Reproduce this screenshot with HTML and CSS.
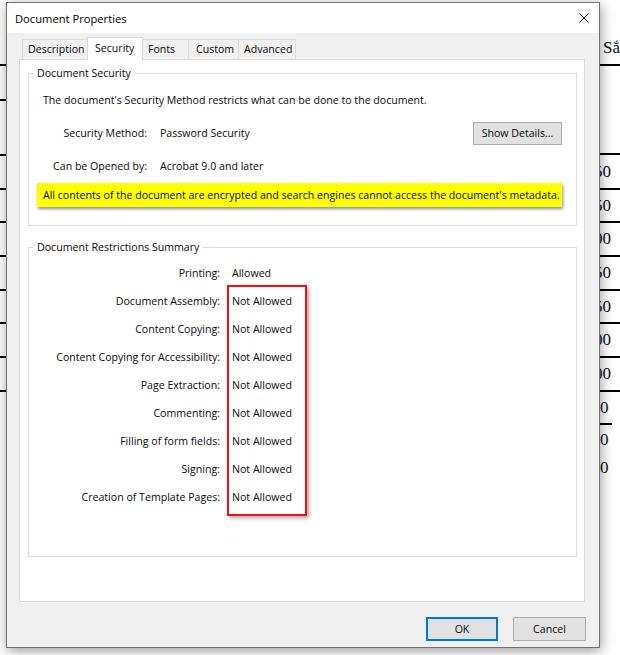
FILE: index.html
```html
<!DOCTYPE html>
<html lang="en">
<head>
    <meta charset="UTF-8">
    <meta name="viewport" content="width=device-width, initial-scale=1.0">
    <title>Document Properties</title>
    <link rel="stylesheet" href="styles.css">
</head>
<body>
    <!-- spreadsheet behind the dialog -->
    <div class="sheet">
        <div class="sheet-col sheet-left">
            <div class="cell h66"></div>
            <div class="cell h35"></div>
            <div class="cell h55"></div>
            <div class="cell h34"></div>
            <div class="cell h33"></div>
            <div class="cell h34"></div>
            <div class="cell h34"></div>
            <div class="cell h33"></div>
            <div class="cell h34"></div>
            <div class="cell h34"></div>
        </div>
        <div class="sheet-col sheet-right">
            <div class="cell h66 head">Sắ</div>
            <div class="cell h89"></div>
            <div class="cell h35">50</div>
            <div class="cell h33">50</div>
            <div class="cell h34">00</div>
            <div class="cell h34">50</div>
            <div class="cell h33">50</div>
            <div class="cell h34">00</div>
            <div class="cell h34">00</div>
            <div class="cell h33 single short">0</div>
            <div class="cell h30 single plain">0</div>
            <div class="cell h25 single plain">0</div>
        </div>
    </div>

    <div class="dialog">
        <div class="titlebar">
            <span class="title">Document Properties</span>
            <svg class="close" width="10" height="10" viewBox="0 0 10 10">
                <path d="M0.5 0.5 L9.5 9.5 M9.5 0.5 L0.5 9.5" stroke="#111" stroke-width="1" fill="none"/>
            </svg>
        </div>

        <div class="tabs">
            <div class="tab tab-desc">Description</div>
            <div class="tab tab-security active">Security</div>
            <div class="tab tab-fonts">Fonts</div>
            <div class="tab tab-custom">Custom</div>
            <div class="tab tab-advanced">Advanced</div>
        </div>

        <div class="panel">
            <fieldset class="group group-security">
                <legend>Document Security</legend>
                <p class="intro">The document's Security Method restricts what can be done to the document.</p>
                <div class="field-row first-row">
                    <span class="field-label">Security Method:</span>
                    <span class="field-value">Password Security</span>
                    <button class="btn btn-details">Show Details...</button>
                </div>
                <div class="field-row">
                    <span class="field-label">Can be Opened by:</span>
                    <span class="field-value">Acrobat 9.0 and later</span>
                </div>
                <div class="note">All contents of the document are encrypted and search engines cannot access the document's metadata.</div>
            </fieldset>

            <fieldset class="group group-restrictions">
                <legend>Document Restrictions Summary</legend>
                <div class="summary">
                    <div class="summary-labels">
                        <div class="summary-row">Printing:</div>
                        <div class="summary-row">Document Assembly:</div>
                        <div class="summary-row">Content Copying:</div>
                        <div class="summary-row">Content Copying for Accessibility:</div>
                        <div class="summary-row">Page Extraction:</div>
                        <div class="summary-row">Commenting:</div>
                        <div class="summary-row">Filling of form fields:</div>
                        <div class="summary-row">Signing:</div>
                        <div class="summary-row">Creation of Template Pages:</div>
                    </div>
                    <div class="summary-values">
                        <div class="summary-row allowed">Allowed</div>
                        <div class="highlight">
                            <div class="summary-row">Not Allowed</div>
                            <div class="summary-row">Not Allowed</div>
                            <div class="summary-row">Not Allowed</div>
                            <div class="summary-row">Not Allowed</div>
                            <div class="summary-row">Not Allowed</div>
                            <div class="summary-row">Not Allowed</div>
                            <div class="summary-row">Not Allowed</div>
                            <div class="summary-row">Not Allowed</div>
                        </div>
                    </div>
                </div>
            </fieldset>
        </div>

        <div class="actions">
            <button class="btn btn-ok">OK</button>
            <button class="btn btn-cancel">Cancel</button>
        </div>
    </div>
</body>
</html>
```

FILE: styles.css
```css
* {
    margin: 0;
    padding: 0;
    box-sizing: border-box;
}

body {
    width: 620px;
    height: 655px;
    position: relative;
    overflow: hidden;
    background: #ffffff;
    font-family: 'Open Sans', 'Noto Sans', sans-serif;
    font-size: 10.6px;
    color: #0a0a0a;
}

/* background spreadsheet */
.sheet {
    display: flex;
    justify-content: space-between;
    height: 655px;
}

.sheet-col {
    display: flex;
    flex-direction: column;
}

.sheet-left {
    width: 6px;
}

.sheet-right {
    width: 32px;
    font-family: 'Liberation Serif', 'DejaVu Serif', serif;
    font-size: 17px;
    color: #101020;
}

.cell {
    border-bottom: 2px solid #000;
    padding-left: 6px;
    display: flex;
    align-items: center;
    white-space: nowrap;
}

.cell.head {
    align-items: flex-start;
    padding-top: 38px;
    padding-left: 15px;
    line-height: 20px;
}

.cell.single {
    padding-left: 12px;
}

.cell.short {
    width: 24px;
}

.cell.plain {
    border-bottom: none;
}

.h25 { height: 25px; }
.h30 { height: 30px; }
.h33 { height: 33px; }
.h34 { height: 34px; }
.h35 { height: 35px; }
.h55 { height: 55px; }
.h66 { height: 66px; }
.h89 { height: 89px; }

/* dialog */
.dialog {
    position: absolute;
    left: 6px;
    top: 2px;
    width: 594px;
    background: #f0f0f0;
    border: 1px solid #707070;
    box-shadow: 1px 3px 12px rgba(0, 0, 0, 0.4);
    display: flex;
    flex-direction: column;
}

.titlebar {
    height: 30px;
    background: #ffffff;
    display: flex;
    align-items: center;
    justify-content: space-between;
    padding: 0 10px 0 8px;
}

.title {
    font-size: 11.2px;
    color: #000;
}

.close {
    display: block;
    margin-top: -1px;
}

/* tabs */
.tabs {
    display: flex;
    align-items: flex-end;
    height: 22px;
    margin: 4px 0 0 15px;
}

.tab {
    height: 20px;
    line-height: 19px;
    padding-left: 5px;
    background: #f0f0f0;
    border: 1px solid #d9d9d9;
    border-bottom: none;
    margin-left: -1px;
    white-space: nowrap;
}

.tab:first-child {
    margin-left: 0;
}

.tab.active {
    height: 23px;
    line-height: 20px;
    margin-bottom: -1px;
    padding-left: 7px;
    background: #ffffff;
    position: relative;
    z-index: 1;
}

.tab-desc { width: 66px; }
.tab-security { width: 56px; }
.tab-fonts { width: 47px; }
.tab-custom { width: 51px; padding-left: 7px; }
.tab-advanced { width: 58px; }

.panel {
    height: 543px;
    margin: 0 14px 0 12px;
    background: #ffffff;
    border: 1px solid #d9d9d9;
    padding: 5px 7px 0 8px;
}

/* group boxes */
.group {
    border: 1px solid #dcdcdc;
    padding: 0 14px;
    min-width: 0;
}

.group legend {
    margin-left: -10px;
    padding: 0 4px;
    line-height: 16px;
}

.group-security {
    padding-bottom: 18px;
}

.intro {
    margin-top: 11px;
    line-height: 16px;
}

.field-row {
    display: flex;
    align-items: center;
    height: 24px;
    margin-top: 9px;
}

.field-row.first-row {
    margin-top: 13px;
}

.field-label {
    width: 104px;
    text-align: right;
    white-space: nowrap;
}

.field-value {
    margin-left: 13px;
}

.note {
    margin: 5px 0 0 -6px;
    height: 24px;
    line-height: 24px;
    padding-left: 6px;
    background: #ffff00;
    box-shadow: 1px 2px 3px rgba(0, 0, 0, 0.45);
    white-space: nowrap;
}

.group-restrictions {
    margin-top: 13px;
    padding-bottom: 40px;
}

.summary {
    display: flex;
    padding-top: 4px;
}

.summary-row {
    height: 28px;
    line-height: 28px;
    white-space: nowrap;
}

.summary-labels {
    width: 177px;
    text-align: right;
}

.summary-values {
    margin-left: 7px;
}

.summary-row.allowed {
    padding-left: 5px;
}

.highlight {
    width: 80px;
    margin-top: -2px;
    padding: 0 0 3px 3px;
    border: 2px solid #ee1111;
    box-shadow: 2px 2px 4px rgba(0, 0, 0, 0.35);
}

/* buttons */
.btn {
    font-family: inherit;
    font-size: 10.6px;
    color: #0a0a0a;
    background: #e1e1e1;
    border: 1px solid #adadad;
    height: 24px;
}

.btn-details {
    width: 89px;
    height: 23px;
    margin-left: auto;
}

.actions {
    display: flex;
    justify-content: flex-end;
    gap: 15px;
    margin: 15px 13px 6px 0;
}

.btn-ok {
    width: 72px;
    border: 2px solid #0078d7;
}

.btn-cancel {
    width: 73px;
}
```
